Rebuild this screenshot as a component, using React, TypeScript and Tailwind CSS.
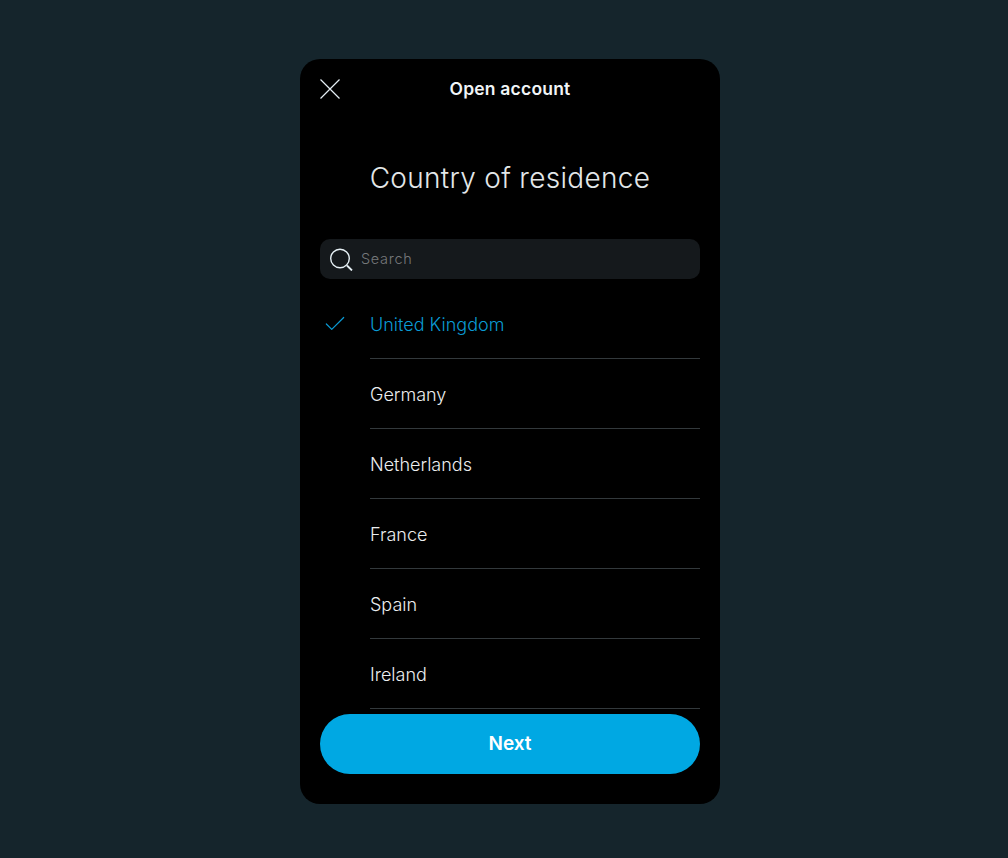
import { Check } from "lucide-react";

const countries = ["Germany", "Netherlands", "France", "Spain", "Ireland"];

export default function App() {
  return (
    <main className="flex min-h-[858px] items-start justify-center bg-[#15252c] pl-3 pt-[59px] font-['Inter',sans-serif]">
      <div className="flex h-[745px] w-[420px] flex-col rounded-[20px] bg-black px-5">
        {/* Header */}
        <div className="relative flex h-[60px] items-center justify-center">
          <svg
            className="absolute left-0 top-[20px]"
            width="20"
            height="20"
            viewBox="0 0 20 20"
            fill="none"
            stroke="#e4eef4"
            strokeWidth="1.2"
          >
            <path d="M0.5 0.5 19.5 19.5M19.5 0.5 0.5 19.5" />
          </svg>
          <h2 className="text-[17.5px] font-semibold tracking-[0.2px] text-[#f1f5f7]">Open account</h2>
        </div>

        <h1 className="mt-[40px] h-[40px] text-center text-[28px] font-light leading-[38px] tracking-[0.3px] text-[#e3e7e9]">
          Country of residence
        </h1>

        {/* Search */}
        <div className="mt-[40px] flex h-10 items-center rounded-[10px] bg-[#15191c] pl-[10px]">
          <svg width="23" height="23" viewBox="0 0 23 23" fill="none" stroke="#e6f0f5" strokeWidth="1.4">
            <circle cx="10" cy="10.5" r="9.3" />
            <path d="m17 17.5 5 5" strokeWidth="1.8" />
          </svg>
          <span className="ml-2 text-[14.5px] font-light tracking-[0.7px] text-[#75787b]">Search</span>
        </div>

        {/* Country list */}
        <div className="mt-[10px] flex flex-col">
          <div className="flex h-[70px]">
            <div className="flex w-[50px] items-center pl-[2px]">
              <Check size={26} strokeWidth={1.1} className="text-[#0a9bd5]" />
            </div>
            <div className="flex flex-1 items-center border-b border-[#33393c] pt-[1px] text-[18px] font-[350] text-[#0a9bd5]">
              United Kingdom
            </div>
          </div>
          {countries.map((country) => (
            <div key={country} className="ml-[50px] flex h-[70px] items-center border-b border-[#33393c] pt-[1px] text-[18px] font-[350] text-[#eceeef]">
              {country}
            </div>
          ))}
        </div>

        <button className="mt-[5px] h-[60px] rounded-[30px] bg-[#00a8e3] text-[19px] font-semibold text-white">
          Next
        </button>
      </div>
    </main>
  );
}
